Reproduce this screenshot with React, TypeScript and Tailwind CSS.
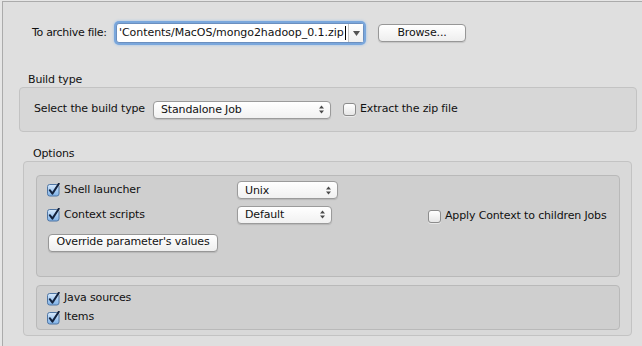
// Export wizard – archive options page
import React from "react";

const font = { fontFamily: '"DejaVu Sans", "Liberation Sans", sans-serif' };

function CheckBox({ checked }: { checked?: boolean }) {
    if (!checked) {
        return (
            <span className="inline-block w-[13px] h-[13px] rounded-[3px] border border-[#8c8c8c] bg-[linear-gradient(#ffffff,#e6e6e6)] shadow-[0_1px_0_rgba(255,255,255,0.5)] shrink-0" />
        );
    }
    return (
        <svg width="14" height="14" viewBox="0 0 14 14" className="shrink-0">
            <defs>
                <linearGradient id="cbg" x1="0" y1="0" x2="0" y2="1">
                    <stop offset="0" stopColor="#d9eafb" />
                    <stop offset="0.5" stopColor="#a9cdf3" />
                    <stop offset="1" stopColor="#7fb1e6" />
                </linearGradient>
            </defs>
            <rect x="0.5" y="1.5" width="11.5" height="11.5" rx="2.2" fill="url(#cbg)" stroke="#4f75a3" />
            <path d="M2.8 7.2 L5.4 10.6 L11.8 0.8" fill="none" stroke="#13223d" strokeWidth="2" strokeLinecap="round" strokeLinejoin="round" />
        </svg>
    );
}

function Popup({ label, width }: { label: string; width: string }) {
    return (
        <div
            className={`${width} h-[18px] flex items-center justify-between pl-[7px] pr-[6px] rounded-[4px] border border-[#9b9b9b] bg-[linear-gradient(#ffffff,#f1f1f1)] shadow-[0_1px_1px_rgba(0,0,0,0.12)]`}
        >
            <span className="leading-none">{label}</span>
            <svg width="5" height="9" viewBox="0 0 5 9">
                <path d="M2.5 0.5 L5 3.5 H0 Z" fill="#4a4a4a" />
                <path d="M2.5 8.5 L5 5.5 H0 Z" fill="#4a4a4a" />
            </svg>
        </div>
    );
}

function PushButton({ label, width }: { label: string; width: string }) {
    return (
        <div
            className={`${width} h-[18px] flex items-center justify-center rounded-[4px] border border-[#979797] bg-[linear-gradient(#ffffff,#eeeeee)] shadow-[0_1px_1px_rgba(0,0,0,0.12)]`}
        >
            {label}
        </div>
    );
}

export default function App() {
    return (
        <div
            className="w-[642px] h-[346px] overflow-hidden bg-[#e6e6e6] pl-[2px] pt-[1px] text-[11px] text-[#111] tracking-[-0.15px]"
            style={font}
        >
            <div className="h-full border-l border-t border-[#ababab] bg-[#dfdfdf]">
                {/* Archive file */}
                <div className="mt-[21px] h-[20px] flex items-center pl-[29px]">
                    <span className="w-[84px] tracking-[-0.3px]">To archive file:</span>
                    <div className="w-[248px] h-[20px] flex rounded-[3px] shadow-[0_0_0_2px_#7aa7dc,0_0_3px_2px_#9cc0ea] bg-white border border-[#6b8fbf]">
                        <div className="flex-1 flex items-center pl-[2px] overflow-hidden whitespace-nowrap tracking-[-0.05px]">
                            'Contents/MacOS/mongo2hadoop_0.1.zip
                            <span className="inline-block w-px h-[14px] bg-black ml-px" />
                        </div>
                        <div className="w-[15px] border-l border-[#c4c4c4] flex items-center justify-center bg-[linear-gradient(#ffffff,#f0f0f0)]">
                            <svg width="7" height="5" viewBox="0 0 7 5">
                                <path d="M0 0 H7 L3.5 5 Z" fill="#555" />
                            </svg>
                        </div>
                    </div>
                    <div className="ml-[14px]">
                        <PushButton label="Browse..." width="w-[88px]" />
                    </div>
                </div>

                {/* Build type */}
                <div className="mt-[30px] h-[14px] leading-[14px] pl-[25px]">Build type</div>
                <div className="ml-[16px] w-[618px] h-[45px] rounded-[4px] border border-[#c3c3c3] bg-[#d7d7d7] flex items-center pl-[14px]">
                    <span className="w-[119px]">Select the build type</span>
                    <Popup label="Standalone Job" width="w-[178px]" />
                    <div className="ml-[12px] flex items-center gap-[4px]">
                        <CheckBox />
                        <span>Extract the zip file</span>
                    </div>
                </div>

                {/* Options */}
                <div className="mt-[15px] h-[14px] leading-[14px] pl-[30px]">Options</div>
                <div className="ml-[20px] w-[609px] h-[175px] rounded-[4px] border border-[#c3c3c3] bg-[#d9d9d9] pt-[13px] pl-[12px] flex flex-col gap-[8px]">
                    <div className="w-[584px] h-[102px] rounded-[4px] border border-[#b9b9b9] bg-[#cfcfcf] pt-[5px] pl-[10px]">
                        <div className="grid grid-cols-[190px_191px_1fr] items-center">
                            <div className="h-[17px] flex items-center gap-[3px]">
                                <CheckBox checked />
                                <span>Shell launcher</span>
                            </div>
                            <Popup label="Unix" width="w-[101px]" />
                            <div />
                        </div>
                        <div className="mt-[6px] grid grid-cols-[190px_191px_1fr] items-center">
                            <div className="h-[18px] flex items-center gap-[3px]">
                                <CheckBox checked />
                                <span>Context scripts</span>
                            </div>
                            <Popup label="Default" width="w-[95px]" />
                            <div className="flex items-center gap-[4px] pt-[3px]">
                                <CheckBox />
                                <span>Apply Context to children Jobs</span>
                            </div>
                        </div>
                        <div className="mt-[9px] ml-[1px]">
                            <PushButton label="Override parameter's values" width="w-[170px]" />
                        </div>
                    </div>
                    <div className="w-[584px] h-[45px] rounded-[4px] border border-[#b9b9b9] bg-[#cfcfcf] pt-[3px] pl-[10px]">
                        <div className="h-[19px] flex items-center gap-[3px]">
                            <CheckBox checked />
                            <span>Java sources</span>
                        </div>
                        <div className="h-[19px] flex items-center gap-[3px]">
                            <CheckBox checked />
                            <span>Items</span>
                        </div>
                    </div>
                </div>
            </div>
        </div>
    );
}
